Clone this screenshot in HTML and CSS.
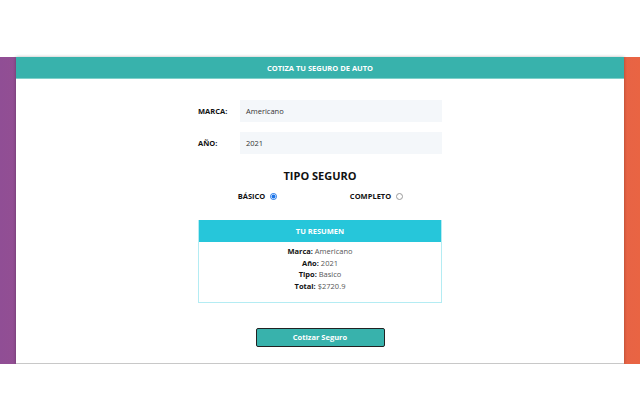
FILE: index.html
```html
<!DOCTYPE html>
<html lang="es">
<head>
<meta charset="utf-8">
<title>Cotiza tu seguro</title>
<link rel="stylesheet" href="styles.css">
</head>
<body>
<div class="band">
  <div class="card">
    <header class="card-header">COTIZA TU SEGURO DE AUTO</header>
    <form class="form">
      <div class="field">
        <label class="label">MARCA:</label>
        <div class="input">Americano</div>
      </div>
      <div class="field">
        <label class="label">AÑO:</label>
        <div class="input">2021</div>
      </div>
      <h2 class="title">TIPO SEGURO</h2>
      <div class="radios">
        <label class="radio-item">BÁSICO <span class="radio checked"></span></label>
        <label class="radio-item">COMPLETO <span class="radio"></span></label>
      </div>
      <div class="summary">
        <div class="summary-header">TU RESUMEN</div>
        <div class="summary-body">
          <p><b>Marca:</b> Americano</p>
          <p><b>Año:</b> 2021</p>
          <p><b>Tipo:</b> Basico</p>
          <p><b>Total:</b> $2720.9</p>
        </div>
      </div>
      <div class="actions">
        <button type="button" class="btn">Cotizar Seguro</button>
      </div>
    </form>
  </div>
</div>
</body>
</html>
```

FILE: styles.css
```css
* { box-sizing: border-box; }
body {
  margin: 0;
  background: #fff;
  font-family: "Open Sans", "Noto Sans", sans-serif;
  color: #222;
}
.band {
  margin-top: 57px;
  padding: 0 16px;
  background: linear-gradient(to right, #904e95, #e96443);
}
.card {
  background: #fff;
  box-shadow: 0 0 3px rgba(0,0,0,0.3);
  border-bottom: 1px solid #c8c8c8;
  height: 307px;
}
.card-header {
  height: 22px;
  background: #38b2ac;
  color: #fff;
  font-size: 7.5px;
  font-weight: 700;
  display: flex;
  align-items: center;
  justify-content: center;
  border-bottom: 1px solid #7fd0ca;
}
.form {
  width: 244px;
  margin: 0 auto;
  padding-top: 21px;
}
.field {
  display: flex;
  align-items: center;
  margin-bottom: 10px;
}
.label {
  width: 42px;
  font-size: 7.5px;
  font-weight: 700;
  color: #111;
}
.input {
  flex: 1;
  height: 22px;
  background: #f4f7fa;
  font-size: 7.5px;
  color: #333;
  padding-left: 6px;
  display: flex;
  align-items: center;
}
.title {
  margin: 0;
  padding-top: 2px;
  text-align: center;
  font-size: 11px;
  font-weight: 700;
  color: #111;
  line-height: 20px;
}
.radios {
  display: grid;
  grid-template-columns: 1fr 1fr;
  justify-items: center;
  padding-right: 6px;
  margin-top: 5px;
  margin-bottom: 19px;
}
.radio-item {
  font-size: 7.5px;
  font-weight: 700;
  color: #111;
  display: flex;
  align-items: center;
  gap: 5px;
}
.radio {
  display: inline-block;
  width: 7px;
  height: 7px;
  border-radius: 50%;
  border: 1px solid #9a9a9a;
  background: #fff;
}
.radio.checked {
  border-color: #1a73e8;
  background: radial-gradient(circle, #1a73e8 0 1.8px, #fff 2.2px);
}
.summary {
  border: 1px solid #b4ecf3;
  border-top: none;
}
.summary-header {
  height: 22px;
  background: #26c6da;
  color: #fff;
  font-size: 7.5px;
  font-weight: 700;
  display: flex;
  align-items: center;
  justify-content: center;
}
.summary-body {
  padding: 4px 0 9px;
  text-align: center;
  font-size: 7.5px;
  color: #555;
}
.summary-body p {
  margin: 0;
  line-height: 11.7px;
}
.summary-body b { color: #111; }
.actions {
  display: flex;
  justify-content: center;
  margin-top: 25px;
}
.btn {
  width: 129px;
  height: 19px;
  background: #38b2ac;
  color: #fff;
  border: 1px solid #222;
  border-radius: 2px;
  font-family: inherit;
  font-size: 7.5px;
  font-weight: 700;
  padding: 0;
}
```
